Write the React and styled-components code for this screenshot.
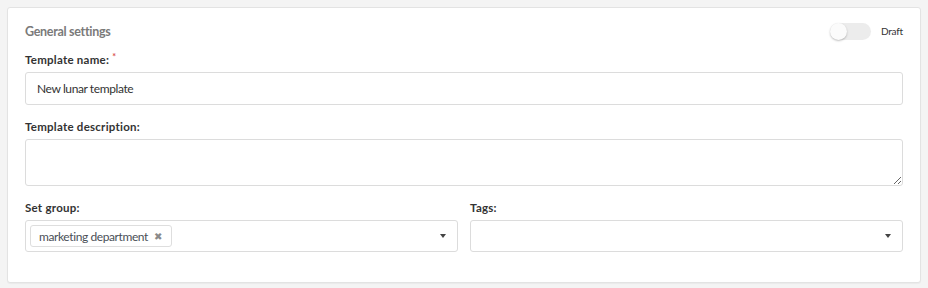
import React from "react"
import styled, { createGlobalStyle } from 'styled-components';

const GlobalStyle = createGlobalStyle`
    html, body {
        margin: 0;
        padding: 0;
        background-color: #f4f4f4;
        font-family: Lato, "Open Sans", sans-serif;
        color: #333;
    }
`;

const Page = styled.div`
    padding: 7px;
`;

const Card = styled.section`
    background-color: #fff;
    border: 1px solid #e3e3e3;
    border-radius: 3px;
    padding: 14px 17px 30px 17px;
    box-shadow: 0 1px 1px rgba(0, 0, 0, 0.04);
`;

const CardHeader = styled.div`
    display: flex;
    align-items: center;
    justify-content: space-between;
    height: 18px;
    margin-bottom: 12px;
`;

const Title = styled.h2`
    margin: 0;
    font-size: 12.5px;
    font-weight: 700;
    color: #7a7a7a;
    letter-spacing: -0.3px;
`;

const StatusToggle = styled.label`
    display: flex;
    align-items: center;
    gap: 10px;
    font-size: 10px;
    letter-spacing: -0.2px;
    color: #333;
`;

const Track = styled.span`
    position: relative;
    display: inline-block;
    width: 41px;
    height: 17px;
    border-radius: 9px;
    background-color: #ececec;
`;

const Knob = styled.span`
    position: absolute;
    top: 0;
    left: ${props => (props.$on ? '24px' : '0')};
    width: 17px;
    height: 17px;
    border-radius: 50%;
    background-color: #fbfbfb;
    box-shadow: 0 1px 2px rgba(0, 0, 0, 0.25);
`;

const Field = styled.div`
    margin-bottom: ${props => (props.$last ? '0' : '14px')};
    min-width: 0;
`;

const Label = styled.div`
    font-size: 11.5px;
    font-weight: 700;
    line-height: 16px;
    letter-spacing: 0.25px;
    margin-bottom: 4px;
    color: #333;
`;

const Required = styled.sup`
    color: #d9534f;
    font-size: 9px;
    margin-left: 3px;
    vertical-align: top;
    position: relative;
    top: -3px;
`;

const TextInput = styled.input`
    box-sizing: border-box;
    display: block;
    width: 100%;
    height: 33px;
    padding: 0 11px;
    border: 1px solid #dcdcdc;
    border-radius: 3px;
    font-family: inherit;
    font-size: 12px;
    letter-spacing: -0.4px;
    color: #333;
    outline: none;
`;

const TextArea = styled.textarea`
    box-sizing: border-box;
    display: block;
    width: 100%;
    height: 47px;
    padding: 6px 11px;
    border: 1px solid #dcdcdc;
    border-radius: 3px;
    font-family: inherit;
    font-size: 12px;
    resize: vertical;
    outline: none;
`;

const Row = styled.div`
    display: grid;
    grid-template-columns: 1fr 1fr;
    gap: 12px;
`;

const Select = styled.div`
    box-sizing: border-box;
    display: flex;
    align-items: center;
    height: 32px;
    padding: 0 11px 0 4px;
    border: 1px solid #dcdcdc;
    border-radius: 3px;
`;

const Chips = styled.div`
    flex: 1;
    display: flex;
    gap: 4px;
`;

const Chip = styled.span`
    display: inline-flex;
    align-items: center;
    gap: 6px;
    height: 20px;
    padding: 0 9px 0 8px;
    border: 1px solid #dedede;
    border-radius: 3px;
    font-size: 12px;
    letter-spacing: -0.4px;
    color: #4a4f57;
`;

const ChipRemove = styled.span`
    font-size: 10px;
    color: #8a8a8a;
`;

const Caret = styled.span`
    width: 0;
    height: 0;
    border-left: 3.5px solid transparent;
    border-right: 3.5px solid transparent;
    border-top: 4px solid #444;
`;

export default function App() {
    return (
        <>
            <GlobalStyle />
            <Page>
                <Card>
                    <CardHeader>
                        <Title>General settings</Title>
                        <StatusToggle>
                            <Track><Knob $on={false} /></Track>
                            Draft
                        </StatusToggle>
                    </CardHeader>
                    <Field>
                        <Label>Template name:<Required>*</Required></Label>
                        <TextInput defaultValue="New lunar template" />
                    </Field>
                    <Field>
                        <Label>Template description:</Label>
                        <TextArea />
                    </Field>
                    <Row>
                        <Field $last>
                            <Label>Set group:</Label>
                            <Select>
                                <Chips>
                                    <Chip>marketing department <ChipRemove>✖</ChipRemove></Chip>
                                </Chips>
                                <Caret />
                            </Select>
                        </Field>
                        <Field $last>
                            <Label>Tags:</Label>
                            <Select>
                                <Chips />
                                <Caret />
                            </Select>
                        </Field>
                    </Row>
                </Card>
            </Page>
        </>
    )
}
